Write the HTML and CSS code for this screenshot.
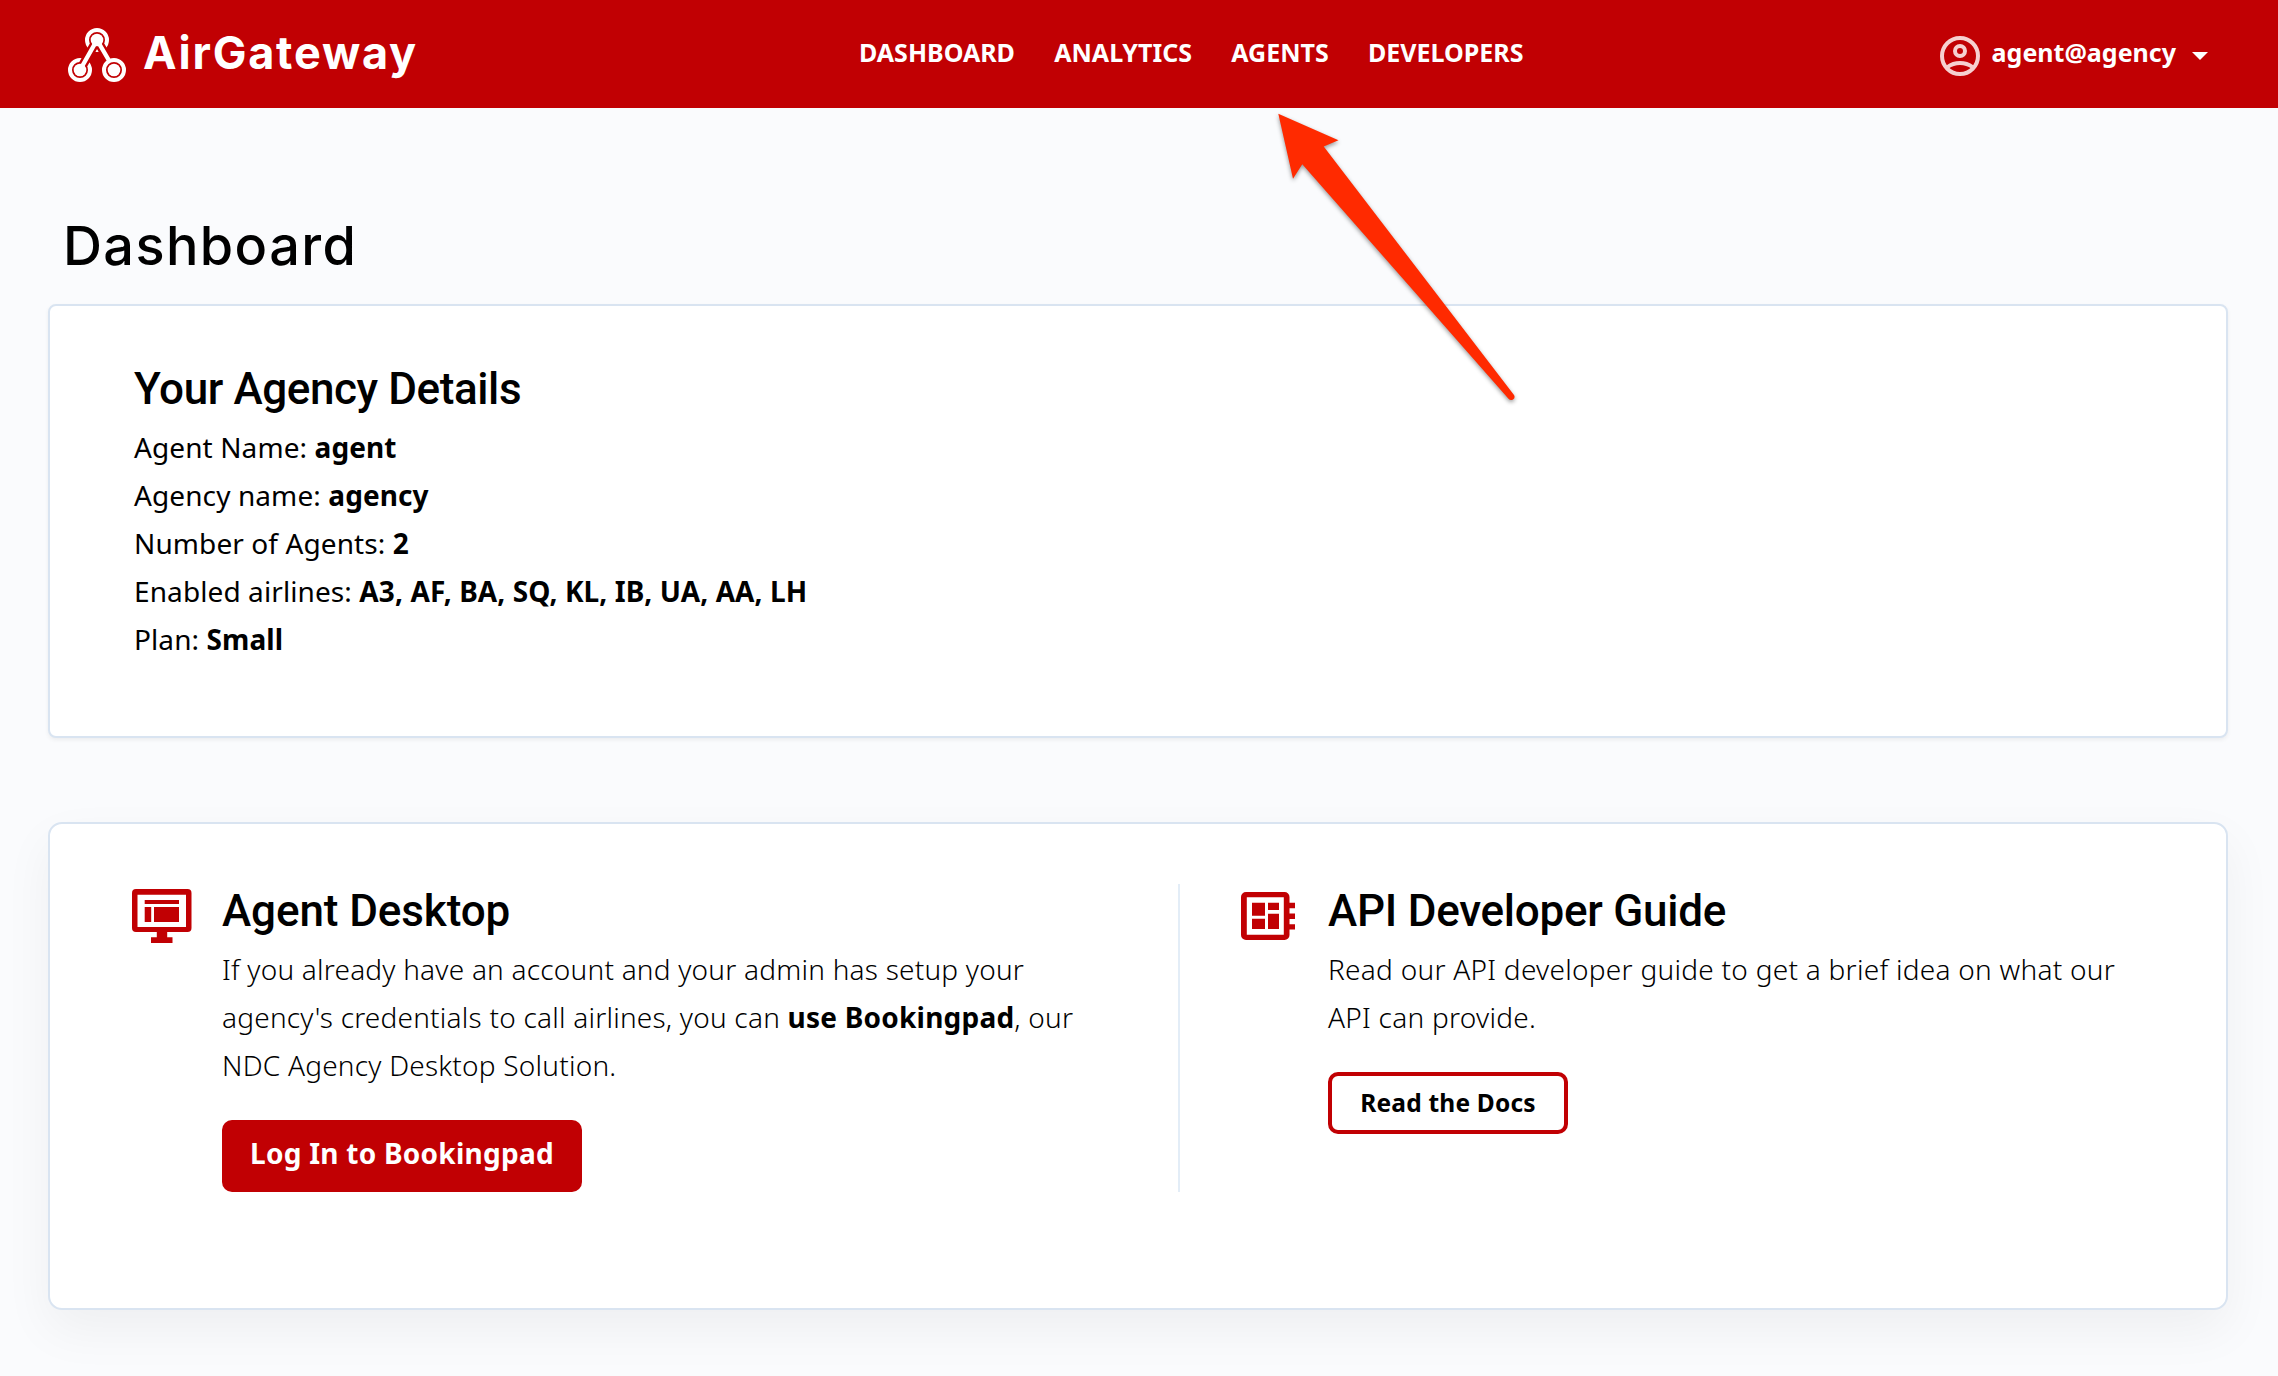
FILE: index.html
```html
<!DOCTYPE html>
<html lang="en">
<head>
<meta charset="utf-8">
<title>AirGateway Dashboard</title>
<link rel="stylesheet" href="styles.css">
</head>
<body>
<header class="topbar">
  <a class="brand">
    <svg class="brand-mark" width="60" height="56" viewBox="0 0 60 56" fill="none" stroke="#fff">
      <g stroke-width="4">
        <circle cx="29" cy="13" r="10"/>
        <circle cx="12" cy="43" r="10"/>
        <circle cx="46" cy="43" r="10"/>
      </g>
      <g stroke="#c10003" stroke-width="9">
        <path d="M29 13 12 43M29 13l11 19"/>
      </g>
      <g stroke-width="4.4"><path d="M29 13 12 43M29 13l12 20.500"/></g>
      <g fill="#fff" stroke="none">
        <circle cx="29" cy="13" r="6.300"/>
        <circle cx="12" cy="43" r="6.300"/>
        <circle cx="46" cy="43" r="6.300"/>
      </g>
    </svg>
    <span class="brand-name">AirGateway</span>
  </a>
  <nav class="nav">
    <a>DASHBOARD</a><a>ANALYTICS</a><a>AGENTS</a><a>DEVELOPERS</a>
  </nav>
  <div class="user">
    <svg class="user-icon" width="40" height="40" viewBox="0 0 40 40" fill="none" stroke="#f6d0d0" stroke-width="4">
      <circle cx="20" cy="20" r="18"/>
      <circle cx="20" cy="15" r="5"/>
      <path d="M7.500 31Q13 27 20 27T32.500 31"/>
    </svg>
    <span class="user-name">agent@agency</span>
    <svg class="caret" width="16" height="8" viewBox="0 0 16 8"><path fill="#fff" d="M0 0h16L8 8z"/></svg>
  </div>
</header>

<main class="page">
  <h1 class="title">Dashboard</h1>

  <section class="card details">
    <h2 class="heading">Your Agency Details</h2>
    <ul class="facts">
      <li>Agent Name: <b>agent</b></li>
      <li>Agency name: <b>agency</b></li>
      <li>Number of Agents: <b>2</b></li>
      <li>Enabled airlines: <b>A3, AF, BA, SQ, KL, IB, UA, AA, LH</b></li>
      <li>Plan: <b>Small</b></li>
    </ul>
  </section>

  <section class="card products">
    <article class="product desktop">
      <svg class="icon" width="64" height="64" viewBox="0 0 64 64" fill="#c10003">
        <path fill-rule="evenodd" d="M4 5h51.500a4 4 0 0 1 4 4v35a4 4 0 0 1-4 4H4a4 4 0 0 1-4-4V9a4 4 0 0 1 4-4zM5.500 10.700v32.300h48.500V10.700z"/>
        <path d="M12.700 16h34.300v4H12.700zM12.700 23h6.500v15h-6.500zM22 23h25v15H22zM24.800 47h10.400v6.200H40.500V59h-21.500v-5.800h5.800z"/>
      </svg>
      <div class="product-body">
        <h2 class="heading">Agent Desktop</h2>
        <p class="copy">If you already have an account and your admin has setup your<br>agency's credentials to call airlines, you can <b>use Bookingpad</b>, our<br>NDC Agency Desktop Solution.</p>
        <a class="button primary">Log In to Bookingpad</a>
      </div>
    </article>
    <article class="product api">
      <svg class="icon" width="64" height="64" viewBox="0 0 64 64" fill="#c10003">
        <path fill-rule="evenodd" d="M5 8h38.500a5 5 0 0 1 5 5v5.700h5.500v5.500h-5.500v5.300h5.500v5.500h-5.500v5.300h5.500v5.200h-5.500V51a5 5 0 0 1-5 5H5a5 5 0 0 1-5-5V13a5 5 0 0 1 5-5zM5.800 13.300v37.500h37V13.300z"/>
        <path d="M11 18.700h13v13H11zM27 18.700h11v7.300H27zM11 34.700h13V45H11zM27 29.700h11V45H27z"/>
      </svg>
      <div class="product-body">
        <h2 class="heading">API Developer Guide</h2>
        <p class="copy">Read our API developer guide to get a brief idea on what our<br>API can provide.</p>
        <a class="button outline">Read the Docs</a>
      </div>
    </article>
  </section>
</main>

<svg class="pointer" width="260" height="310" viewBox="0 0 260 310">
  <path fill="#ff2a00" d="M8.300 3.700 68.500 30.300 53.700 36.500 244 285q1.500 3-1 4.500t-4.500-.7L32.300 54.300 23 68.800z"/>
</svg>
</body>
</html>
```
FILE: styles.css
```css
* { box-sizing: border-box; }

body {
  margin: 0;
  min-height: 1376px;
  overflow: hidden;
  background: #fafbfd;
  color: #000;
  font-family: "Noto Sans", sans-serif;
}

.topbar {
  display: grid;
  grid-template-columns: 859px 1fr auto;
  align-items: center;
  height: 108px;
  padding-right: 70px;
  background: #c10003;
  color: #fff;
  font-size: 25px;
  font-weight: 700;
}

.brand { display: flex; align-items: center; padding-left: 68px; }
.brand-mark { margin: 2px 15px 0 0; }
.brand-name {
  font: 750 45px/60px Inter, sans-serif;
  letter-spacing: 1.8px;
  margin-bottom: 2px;
}

.nav { display: flex; gap: 39.300px; padding-bottom: 4px; }

.user { display: flex; align-items: center; }
.user-icon { margin: 4px 12px 0 0; }
.user-name { padding-bottom: 4px; }
.caret { margin: 4px 0 0 16px; }

.page { padding: 98px 50px 0 48px; }

.title {
  margin: 0 0 18px;
  padding-left: 15px;
  font: 500 54px/80px Inter, sans-serif;
  letter-spacing: 1.4px;
}

.card {
  background: #fff;
  border: 2px solid #d9e4f1;
}

.heading {
  margin: 0 0 7px;
  font: 500 44px/54px Roboto, sans-serif;
  letter-spacing: -0.25px;
}

.details {
  height: 434px;
  padding: 56px 84px;
  border-radius: 8px;
  box-shadow: 0 2px 4px rgba(0, 0, 0, .06);
}
.details .heading { letter-spacing: -0.4px; }

.facts {
  margin: 0;
  padding: 0;
  list-style: none;
  font-size: 28px;
  line-height: 48px;
  letter-spacing: 0.1px;
}

.products {
  display: grid;
  grid-template-columns: 1048px 1fr;
  height: 488px;
  margin-top: 84px;
  padding: 60px 82px 116px;
  border-radius: 14px;
  box-shadow: 0 20px 50px rgba(0, 0, 0, .05);
}

.product { display: flex; }
.desktop { border-right: 2px solid #e3edf7; }
.desktop .heading { letter-spacing: -0.1px; }
.api { padding-left: 61px; }
.icon { flex: none; margin-right: 26px; }
.api .icon { margin-right: 23px; }

.copy {
  margin: 0 0 31px;
  font-size: 28px;
  font-weight: 300;
  line-height: 48px;
  letter-spacing: 0.22px;
  white-space: nowrap;
}
.api .copy { letter-spacing: 0.27px; }
.copy b { font-weight: 700; }

.button {
  display: flex;
  align-items: center;
  justify-content: center;
  border-radius: 10px;
  font-weight: 700;
}
.primary {
  width: 360px;
  height: 72px;
  padding-bottom: 6px;
  background: #c10003;
  color: #fff;
  font-size: 28px;
  letter-spacing: 0.25px;
}
.outline {
  width: 240px;
  height: 62px;
  padding-bottom: 2px;
  border: 4px solid #c10003;
  font-size: 24.5px;
  letter-spacing: 0.2px;
}

.pointer {
  position: absolute;
  left: 1270px;
  top: 110px;
  filter: drop-shadow(0 2px 2px rgba(0, 0, 0, .4));
}
```
